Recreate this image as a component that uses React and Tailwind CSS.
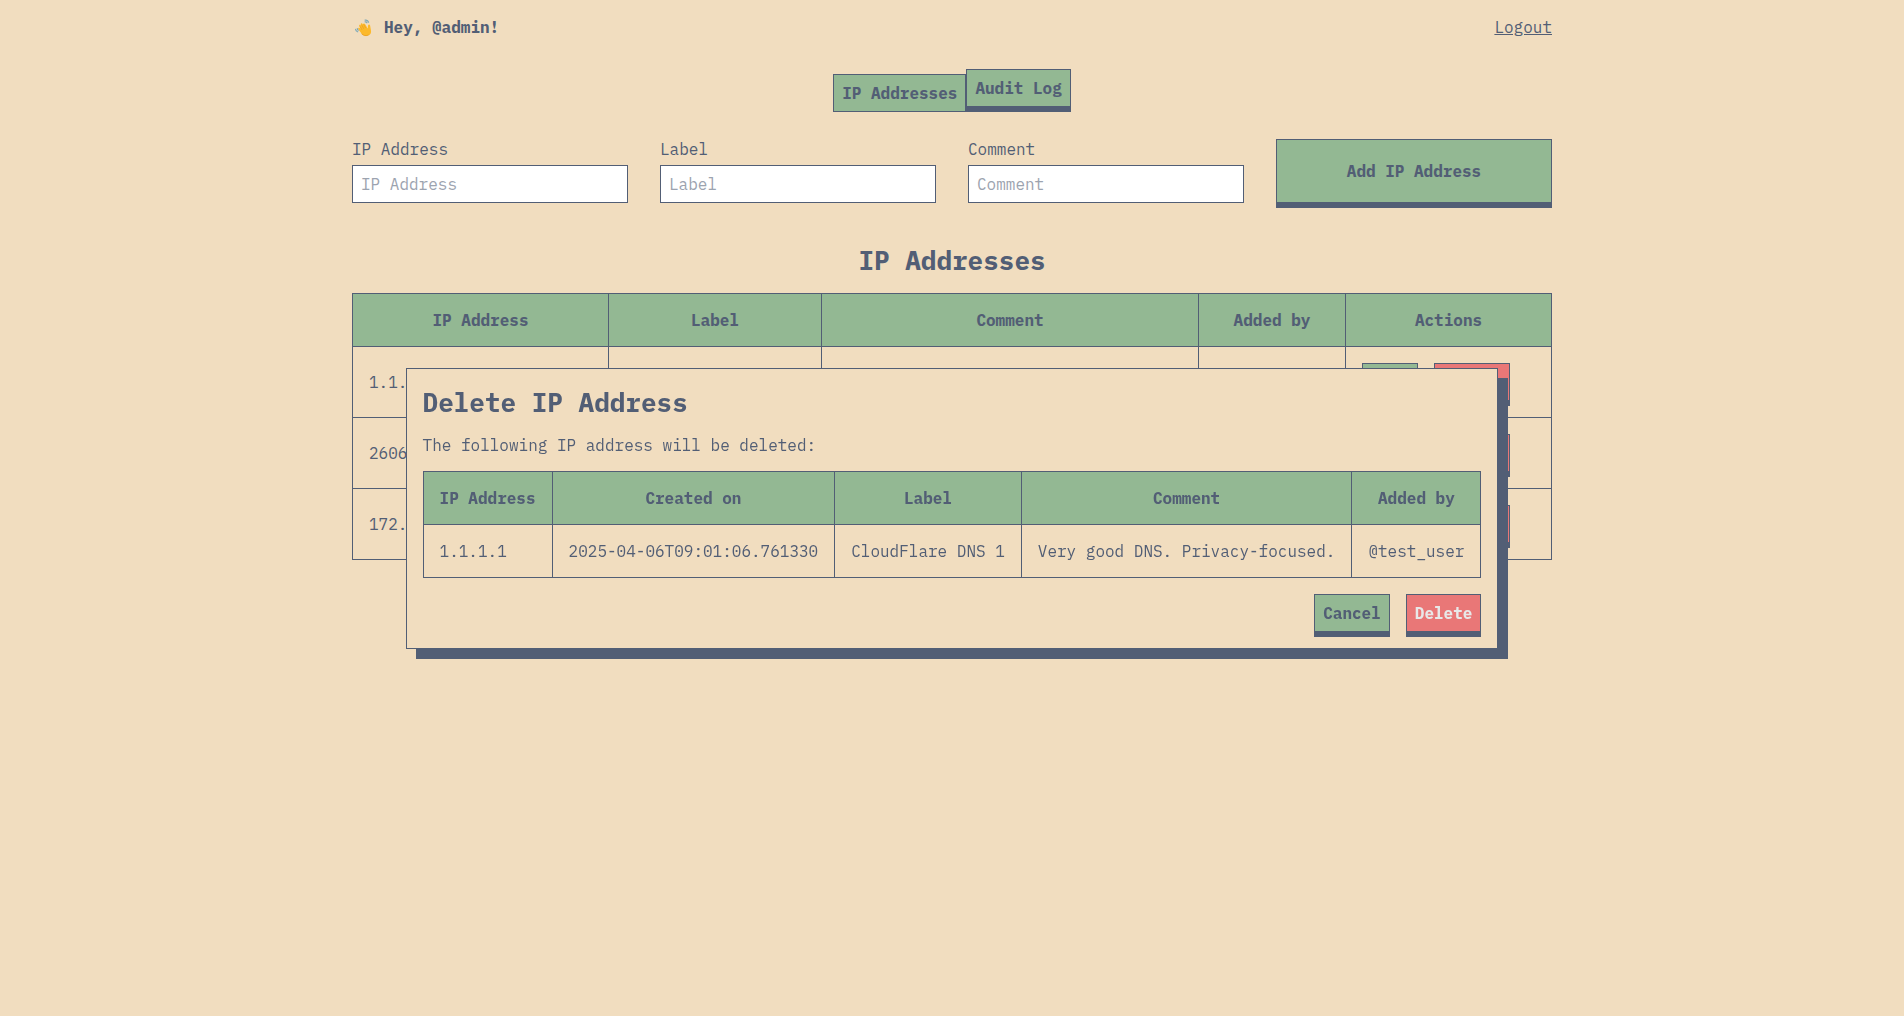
const cell = "border border-[#525e75] p-4";

const rows = [
  { ip: "1.1.1.1", label: "CloudFlare DNS 1", comment: "Very good DNS. Privacy-focused.", user: "@test_user" },
  { ip: "2606:4700::1111", label: "CloudFlare DNS 2", comment: "", user: "@test_user" },
  { ip: "172.16.0.1", label: "", comment: "", user: "@test_user" },
];

function Button({ children, className = "bg-[#93b893]", raised = true, ...props }) {
  return (
    <button
      type="button"
      className={`border border-[#525e75] p-2 leading-5 font-bold ${raised ? "shadow-[0_5px_0_0_#525e75]" : ""} ${className}`}
      {...props}
    >
      {children}
    </button>
  );
}

function Field({ id, label }) {
  return (
    <div className="flex flex-col gap-1.5">
      <label htmlFor={id} className="leading-5">{label}</label>
      <input
        id={id}
        type="text"
        placeholder={label}
        className="w-full border border-[#525e75] bg-white p-2 leading-5 h-[38px] placeholder:text-[#9ca3af]"
      />
    </div>
  );
}

function Wave() {
  return (
    <svg viewBox="0 0 22 22" className="h-[22px] w-[22px]" aria-hidden="true">
      <path
        d="M6.300 13.200c-.6-1 .6-1.900 1.400-1.100l.9.800-1.400-2.800c-.6-1.200.9-2 1.600-.9l.5.700-.5-1.300c-.5-1.200 1.100-1.900 1.700-.8l.5.900c-.3-1.200 1.400-1.900 2-.7l2.700 4.400c.5-.9 0-2.200.4-3.200.4-.9 1.800-.8 2 .3l.8 4.400c.7 2.700-.4 4.800-2.700 5.600-2.500.9-5 .2-6.700-2z"
        fill="#fcb92b"
      />
      <path d="m9.800 13.500-1.500-2.800m3.300 1.800-1.700-3.300m3.600 2.500-1.600-3" fill="none" stroke="#e69a1c" strokeWidth=".6" strokeLinecap="round" />
      <path d="M9.500 17.700c1.900 2.100 4.800 2.500 7 1.200" fill="none" stroke="#e69a1c" strokeWidth=".7" />
      <path d="M3.600 13.400c.2 1.300.9 2 2.100 2.400M5.300 12.600c.1.800.4 1.300 1 1.600M13.100 4.200c1.700-.4 2.900.3 3.500 2M13.100 5.900c.9-.2 1.500.2 1.800.9" fill="none" stroke="#7fa9b8" strokeWidth="1.200" strokeLinecap="round" />
    </svg>
  );
}

function DeleteDialog() {
  return (
    <div className="fixed inset-0 flex items-center justify-center">
      <section
        role="dialog"
        aria-labelledby="dialog-title"
        className="border border-[#525e75] bg-[#f1ddbf] p-4 shadow-[10px_10px_0_0_#525e75]"
      >
        <h2 id="dialog-title" className="text-[26px] leading-[34px] font-bold">Delete IP Address</h2>
        <p className="my-4 leading-5">The following IP address will be deleted:</p>
        <table className="border-collapse leading-5 whitespace-nowrap">
          <thead className="bg-[#93b893]">
            <tr>
              {["IP Address", "Created on", "Label", "Comment", "Added by"].map((h) => (
                <th key={h} scope="col" className={cell}>{h}</th>
              ))}
            </tr>
          </thead>
          <tbody>
            <tr>
              {["1.1.1.1", "2025-04-06T09:01:06.761330", "CloudFlare DNS 1", "Very good DNS. Privacy-focused.", "@test_user"].map((v) => (
                <td key={v} className={cell}>{v}</td>
              ))}
            </tr>
          </tbody>
        </table>
        <div className="mt-4 flex justify-end gap-4">
          <Button>Cancel</Button>
          <Button className="bg-[#e97777] text-[#e8e8e8]">Delete</Button>
        </div>
      </section>
    </div>
  );
}

export default function App() {
  return (
    <div className="min-h-screen bg-[#f1ddbf] font-['IBM_Plex_Mono','Liberation_Mono',monospace] text-base text-[#525e75]">
      <div className="mx-auto max-w-[1200px]">
        <header className="flex items-center justify-between pt-4 pb-[31px] leading-[22px]">
          <p className="flex items-center gap-2.5 font-bold"><Wave />Hey, @admin!</p>
          <a href="#logout" className="underline">Logout</a>
        </header>
        <nav className="mb-[27px] flex items-end justify-center">
          <Button raised={false} aria-current="page">IP Addresses</Button>
          <div className="pb-[5px]"><Button>Audit Log</Button></div>
        </nav>
        <form className="mb-10 grid grid-cols-4 gap-8">
          <Field id="ip" label="IP Address" />
          <Field id="label" label="Label" />
          <Field id="comment" label="Comment" />
          <Button>Add IP Address</Button>
        </form>
        <h1 className="mb-4 text-center text-[26px] leading-[34px] font-bold">IP Addresses</h1>
        <table className="w-full table-fixed border-collapse leading-5">
          <colgroup>
            <col className="w-[256px]" />
            <col className="w-[213px]" />
            <col className="w-[377px]" />
            <col className="w-[147px]" />
            <col />
          </colgroup>
          <thead className="bg-[#93b893]">
            <tr>
              {["IP Address", "Label", "Comment", "Added by", "Actions"].map((h) => (
                <th key={h} scope="col" className={cell}>{h}</th>
              ))}
            </tr>
          </thead>
          <tbody>
            {rows.map((r) => (
              <tr key={r.ip}>
                <td className={cell}>{r.ip}</td>
                <td className={cell}>{r.label}</td>
                <td className={cell}>{r.comment}</td>
                <td className={cell}>{r.user}</td>
                <td className={cell}>
                  <div className="flex gap-4">
                    <Button>Edit</Button>
                    <Button className="bg-[#e97777] text-[#e8e8e8]">Delete</Button>
                  </div>
                </td>
              </tr>
            ))}
          </tbody>
        </table>
      </div>
      <DeleteDialog />
    </div>
  );
}
